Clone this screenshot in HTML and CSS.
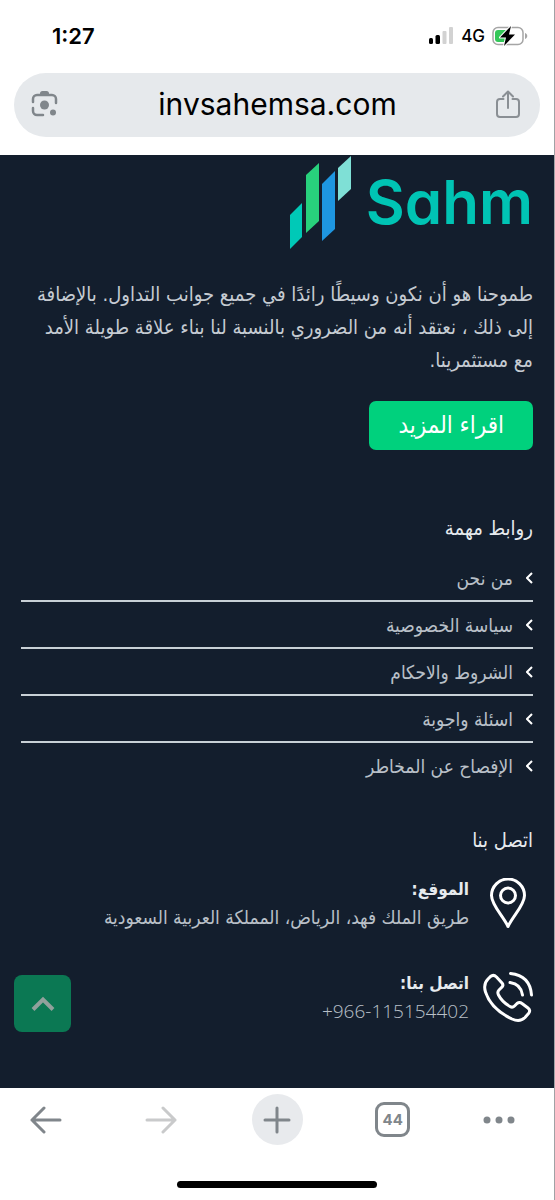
FILE: index.html
```html
<!DOCTYPE html>
<html lang="ar">
<head>
<meta charset="utf-8">
<meta name="viewport" content="width=device-width, initial-scale=1">
<title>Sahm</title>
<link rel="stylesheet" href="styles.css">
</head>
<body>
<div class="screen">
  <header class="browser-top">
    <div class="status">
      <span class="time">1:27</span>
      <div class="status-icons">
        <svg width="25" height="17" viewBox="0 0 25 17" aria-hidden="true">
          <rect x="0" y="11" width="4" height="6" rx="1.500" fill="#000"/>
          <rect x="6.500" y="8" width="4.500" height="9" rx="1.500" fill="#000"/>
          <rect x="13.500" y="4" width="4" height="13" rx="1" fill="#d2d2d2"/>
          <rect x="20" y="0" width="4" height="17" rx="1" fill="#d2d2d2"/>
        </svg>
        <span class="network">4G</span>
        <svg width="36" height="20" viewBox="0 0 36 20" aria-hidden="true">
          <rect x="1" y="1.500" width="30" height="17" rx="5" fill="#fff" stroke="#a5a5a5" stroke-width="1.500"/>
          <path d="M6 4h10v12H6a3 3 0 0 1-3-3V7a3 3 0 0 1 3-3Z" fill="#34c759"/>
          <path d="M33 7c3 1 3 5 0 6Z" fill="#a5a5a5"/>
          <path d="M19 0 8 11.500h6L12 20 23 8.500h-6Z" fill="#000" stroke="#fff" stroke-width="2" paint-order="stroke" stroke-linejoin="round"/>
        </svg>
      </div>
    </div>
    <div class="address">
      <button class="plain" aria-label="Search by image">
        <svg width="28" height="28" viewBox="0 0 28 28" fill="none" stroke="#80868b" stroke-width="2.500" stroke-linecap="round">
          <path d="M2 12V9a4 4 0 0 1 4-4h15a4 4 0 0 1 4 4v4M2 18v3a4 4 0 0 0 4 4h6"/>
          <path d="M9 5V3.500A2.500 2.500 0 0 1 11.500 1h4A2.500 2.500 0 0 1 18 3.500V5Z" fill="#80868b" stroke="none"/>
          <circle cx="13.500" cy="15" r="4.500" fill="#80868b" stroke="none"/>
          <circle cx="22" cy="22.500" r="3" fill="#80868b" stroke="none"/>
        </svg>
      </button>
      <span class="domain">invsahemsa.com</span>
      <button class="plain" aria-label="Share">
        <svg width="24" height="28" viewBox="0 0 24 28" fill="none" stroke="#8a8f94" stroke-width="2" stroke-linecap="round" stroke-linejoin="round">
          <path d="M7.500 9H4a3 3 0 0 0-3 3v12a3 3 0 0 0 3 3h16a3 3 0 0 0 3-3V12a3 3 0 0 0-3-3h-3.500M12 18V1.500M7 6.500l5-5 5 5"/>
        </svg>
      </button>
    </div>
  </header>

  <main class="site" dir="rtl">
    <div class="logo" dir="ltr">
      <svg width="62" height="93" viewBox="0 0 62 93" aria-hidden="true">
        <path d="M0 59 12 47V81L0 93Z" fill="#00c9b7"/>
        <path d="M16 19 29 7V65L16 77Z" fill="#28d17c"/>
        <path d="M32 28 45 15V73L32 85Z" fill="#1e96e0"/>
        <path d="M48 12 61 0V33L48 45Z" fill="#7fe0d6"/>
      </svg>
      <span class="brand">Sahm</span>
    </div>
    <p class="about">طموحنا هو أن نكون وسيطًا رائدًا في جميع جوانب التداول. بالإضافة<br>إلى ذلك ، نعتقد أنه من الضروري بالنسبة لنا بناء علاقة طويلة الأمد<br>مع مستثمرينا.</p>
    <button class="more">اقراء المزيد</button>

    <h2 class="heading">روابط مهمة</h2>
    <ul class="links">
      <li><a href="#about"><svg class="chevron" viewBox="0 0 7 12"><path d="m6 1-5 5 5 5"/></svg>من نحن</a></li>
      <li><a href="#privacy"><svg class="chevron" viewBox="0 0 7 12"><path d="m6 1-5 5 5 5"/></svg>سياسة الخصوصية</a></li>
      <li><a href="#terms"><svg class="chevron" viewBox="0 0 7 12"><path d="m6 1-5 5 5 5"/></svg>الشروط والاحكام</a></li>
      <li><a href="#faq"><svg class="chevron" viewBox="0 0 7 12"><path d="m6 1-5 5 5 5"/></svg>اسئلة واجوبة</a></li>
      <li><a href="#risk"><svg class="chevron" viewBox="0 0 7 12"><path d="m6 1-5 5 5 5"/></svg>الإفصاح عن المخاطر</a></li>
    </ul>

    <h2 class="heading contact-heading">اتصل بنا</h2>
    <div class="contacts">
      <div class="contact">
        <svg class="contact-icon" viewBox="0 0 50 50" aria-hidden="true">
          <path d="M25 48.500C20 38 8.500 27 8.500 17.500a16.500 16.500 0 0 1 33 0C41.500 27 30 38 25 48.500Z"/>
          <circle cx="25" cy="17.500" r="7.500"/>
        </svg>
        <div>
          <h3 class="label">الموقع:</h3>
          <p class="detail">طريق الملك فهد، الرياض، المملكة العربية السعودية</p>
        </div>
      </div>
      <div class="contact">
        <svg class="contact-icon" viewBox="0 0 50 50" aria-hidden="true">
          <path d="M5 7 7.500 4.500Q10.500 2 13.500 5L19 11Q21 13.500 18.500 15.500L16 18Q14 20 15.500 23 19 30 27 34.500 29.500 36 31.500 34L34 31.500Q36.500 29.500 39 31.500L45 36Q48 38.500 45.500 41.500L42 45.500Q37 50.500 29 47 8 37 2.500 20 0 12 5 7Z"/>
          <path d="M27.500 1.500Q47 3.500 48.500 23M27 10.500Q38 12 39.500 23"/>
        </svg>
        <div>
          <h3 class="label">اتصل بنا:</h3>
          <p class="detail phone"><bdi dir="ltr">+966-115154402</bdi></p>
        </div>
      </div>
    </div>
    <button class="to-top" aria-label="Back to top">
      <svg width="24" height="16" viewBox="0 0 24 16" fill="none" stroke="#91a19c" stroke-width="4"><path d="M2 13.500 12 3.500l10 10"/></svg>
    </button>
  </main>

  <footer class="browser-bottom">
    <nav class="toolbar">
      <button class="plain tool" aria-label="Back">
        <svg width="32" height="28" viewBox="0 0 32 28" fill="none" stroke="#80868b" stroke-width="3" stroke-linecap="round" stroke-linejoin="round"><path d="M30 14H2M14 2 2 14l12 12"/></svg>
      </button>
      <button class="plain tool" aria-label="Forward">
        <svg width="32" height="28" viewBox="0 0 32 28" fill="none" stroke="#c9cacb" stroke-width="3" stroke-linecap="round" stroke-linejoin="round"><path d="M2 14h28M18 2l12 12-12 12"/></svg>
      </button>
      <button class="plain tool new-tab" aria-label="New tab">
        <svg width="28" height="28" viewBox="0 0 28 28" fill="none" stroke="#80868b" stroke-width="3" stroke-linecap="round"><path d="M2 14h24M14 2v24"/></svg>
      </button>
      <button class="plain tool"><span class="tabs">44</span></button>
      <button class="plain tool menu" aria-label="Menu">
        <svg width="32" height="8" viewBox="0 0 32 8" fill="#80868b"><circle cx="4" cy="4" r="3.500"/><circle cx="16" cy="4" r="3.500"/><circle cx="28" cy="4" r="3.500"/></svg>
      </button>
    </nav>
    <div class="home-bar"></div>
  </footer>
</div>
</body>
</html>
```
FILE: styles.css
```css
* {
  box-sizing: border-box;
}

body,
h2,
h3,
p,
ul {
  margin: 0;
  padding: 0;
}

body {
  background: #fff;
  font-family: "DejaVu Sans Condensed", "DejaVu Sans", sans-serif;
}

button {
  border: 0;
  font-family: inherit;
  cursor: pointer;
}

.screen {
  display: flex;
  flex-direction: column;
  min-height: 100vh;
  border-right: 1px solid #a0a2a5;
}

.plain {
  display: flex;
  align-items: center;
  justify-content: center;
  padding: 0;
  background: none;
}

.browser-top {
  padding: 0 14px 18px;
  font-family: Inter, sans-serif;
  color: #000;
}

.status {
  display: flex;
  align-items: center;
  justify-content: space-between;
  height: 73px;
  padding: 0 12px 2px 38px;
}

.time {
  font-size: 22px;
  font-weight: 600;
}

.status-icons {
  display: flex;
  align-items: center;
  gap: 7px;
}

.network {
  font-size: 17px;
  font-weight: 500;
}

.address {
  display: flex;
  align-items: center;
  justify-content: space-between;
  height: 64px;
  padding: 0 20px 2px 17px;
  border-radius: 32px;
  background: #e6e9ec;
}

.domain {
  font-size: 30px;
}

.site {
  position: relative;
  display: flex;
  flex: 1;
  flex-direction: column;
  align-items: flex-start;
  padding: 1px 21px 56px;
  background: #131e2d;
  color: #e6eaee;
}

.logo {
  display: flex;
  align-items: center;
  gap: 14px;
}

.brand {
  color: #00c4b4;
  font-family: Inter, sans-serif;
  font-size: 60px;
  font-weight: 600;
  line-height: 93px;
  font-feature-settings: "cv11";
}

.about {
  margin-top: 29px;
  color: #c5cbd2;
  font-size: 20px;
  line-height: 33px;
  white-space: nowrap;
}

.more {
  height: 49px;
  margin-top: 24px;
  padding: 0 29px 2px;
  border-radius: 7px;
  background: #00d17d;
  color: #fff;
  font-size: 24px;
}

.heading {
  margin-top: 62px;
  font-size: 20px;
  font-weight: 400;
  line-height: 32px;
}

.links {
  align-self: stretch;
  margin-top: 11px;
  list-style: none;
}

.links li {
  height: 47px;
  border-bottom: 2px solid #c8d0d6;
}

.links li:last-child {
  border-bottom: 0;
}

.links a {
  display: flex;
  align-items: center;
  gap: 13px;
  height: 45px;
  color: #b9c0c8;
  font-size: 19px;
  text-decoration: none;
}

.chevron {
  width: 7px;
  height: 12px;
  fill: none;
  stroke: #fff;
  stroke-width: 2;
}

.contact-heading {
  margin-top: 34px;
}

.contacts {
  display: flex;
  flex-direction: column;
  gap: 38px;
  margin-top: 19px;
}

.contact {
  display: flex;
  align-items: center;
  gap: 14px;
}

.contact-icon {
  flex: none;
  width: 50px;
  height: 50px;
  fill: none;
  stroke: #fff;
  stroke-width: 3;
  stroke-linecap: round;
  stroke-linejoin: round;
}

.label {
  font-size: 17px;
  font-weight: 700;
  line-height: 28px;
}

.detail {
  color: #b9c0c8;
  font-size: 19px;
  line-height: 28px;
}

.phone {
  font-family: "Open Sans", sans-serif;
  font-weight: 300;
}

.to-top {
  position: absolute;
  bottom: 56px;
  left: 14px;
  display: grid;
  place-items: center;
  width: 57px;
  height: 57px;
  border-radius: 8px;
  background: #0b7853;
}

.browser-bottom {
  display: flex;
  flex-direction: column;
  align-items: center;
  justify-content: space-between;
  height: 112px;
  padding: 6px 0 12px;
}

.toolbar {
  display: flex;
  justify-content: space-between;
  width: 100%;
  padding: 0 20px;
}

.tool {
  width: 51px;
  height: 51px;
}

.menu {
  justify-content: flex-start;
}

.new-tab {
  border-radius: 50%;
  background: #e8eaed;
}

.tabs {
  display: grid;
  place-items: center;
  width: 35px;
  height: 35px;
  border: 3px solid #80868b;
  border-radius: 9px;
  color: #80868b;
  font-family: Inter, sans-serif;
  font-size: 15px;
  font-weight: 700;
}

.home-bar {
  width: 36%;
  height: 7px;
  border-radius: 4px;
  background: #000;
}
```
